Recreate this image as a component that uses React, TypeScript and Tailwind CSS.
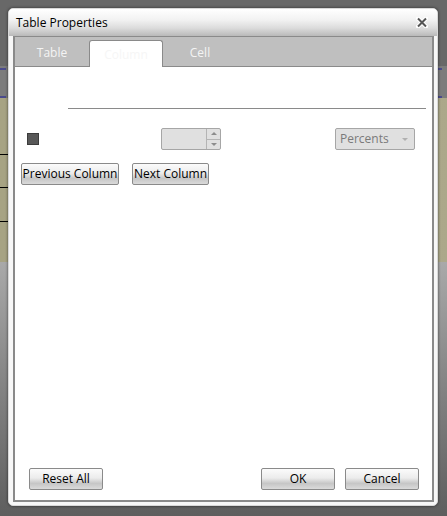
const font = { fontFamily: '"Open Sans", "Noto Sans", Arial, sans-serif' };

const btn =
  "h-[22px] border border-[#8a8a8a] rounded-[2px] bg-[linear-gradient(to_bottom,#fbfbfb_0%,#ececec_45%,#c6c6c6_72%,#dadada_100%)] text-[12px] text-black leading-none flex items-center justify-center";

const Tab = ({ label, active }: { label: string; active?: boolean }) =>
  active ? (
    <div className="w-[74px] mt-[3px] -mb-px h-[27px] bg-white border border-b-0 border-[#8a8a8a] rounded-t-[3px] flex items-center justify-center text-[12px] text-[#f6f6f6] pt-[1px]">
      {label}
    </div>
  ) : (
    <div className="w-[74px] flex items-center justify-center text-[12px] text-[#f4f4f4] pt-[3px]">
      {label}
    </div>
  );

const CloseIcon = () => (
  <svg width="12" height="11" viewBox="0 0 12 11">
    <path d="M2 1.5 L10 9.5 M10 1.5 L2 9.5" stroke="#ffffff" strokeWidth="4" strokeLinecap="round" />
    <path d="M2 1.5 L10 9.5 M10 1.5 L2 9.5" stroke="#555555" strokeWidth="2" />
  </svg>
);

export default function App() {
  return (
    <div className="relative w-[447px] h-[516px] overflow-hidden bg-[#666666]" style={font}>
      {/* page behind the dialog */}
      <div className="flex flex-col h-full">
        <div className="h-[66px] bg-[#686868]" />
        <div className="h-[32px] bg-[#7c7c7c] flex flex-col justify-between">
          <div className="flex justify-between h-[2px] mt-[2px]">
            <div className="w-[6px] bg-[#4b4b8c]" />
            <div className="w-[5px] bg-[#4b4b8c] mr-[5px]" />
          </div>
          <div className="flex justify-between h-[2px]">
            <div className="w-[6px] bg-[#4b4b8c]" />
            <div className="w-[5px] bg-[#4b4b8c] mr-[5px]" />
          </div>
        </div>
        <div className="h-[164px] bg-[linear-gradient(to_right,#a7a383,#a19d7e_50%,#aca88a)] flex flex-col">
          <div className="mt-[56px] w-[8px] h-px bg-black" />
          <div className="mt-[32px] w-[8px] h-px bg-black" />
          <div className="mt-[33px] w-[8px] h-px bg-black" />
        </div>
        <div className="flex-1 bg-[linear-gradient(to_bottom,#a9a9a9,#8a8a8a_40%,#5e5e5e)]" />
      </div>

      {/* dialog */}
      <div className="absolute left-[8px] top-[8px] w-[430px] h-[498px] rounded-[5px] border border-[#d8d8d8] bg-[#f7f7f7] shadow-[0_0_3px_rgba(0,0,0,0.6)] flex flex-col">
        <div className="h-[27px] rounded-t-[4px] bg-[linear-gradient(to_bottom,#ffffff_0%,#f2f2f2_40%,#dcdcdc_70%,#b9b9b9_100%)] flex items-center justify-between pl-[7px] pr-[9px]">
          <span className="text-[12px] text-black">Table Properties</span>
          <CloseIcon />
        </div>

        <div className="flex-1 ml-[4px] mr-[3px] mb-[3px] border-2 border-t border-[#8a8a8a] bg-white flex flex-col">
          <div className="h-[30px] bg-[#bfbfbf] border-b border-[#8a8a8a] flex">
            <Tab label="Table" />
            <Tab label="Column" active />
            <Tab label="Cell" />
          </div>

          <div className="flex-1 flex flex-col">
            <div className="mt-[41px] ml-[53px] mr-[6px] h-px bg-[#8a8a8a]" />

            <div className="mt-[19px] flex items-center h-[22px]">
              <div className="ml-[12px] w-[12px] h-[12px] bg-[#585858] border border-[#3c3c3c]" />
              <div className="ml-[122px] w-[60px] h-[22px] bg-[#e0e0e0] border border-[#a6a6a6] rounded-[2px] flex justify-end">
                <div className="w-[14px] border-l border-[#b4b4b4] flex flex-col">
                  <div className="flex-1 flex items-center justify-center border-b border-[#b4b4b4]">
                    <div className="w-0 h-0 border-x-[3px] border-x-transparent border-b-[3px] border-b-[#8c8c8c]" />
                  </div>
                  <div className="flex-1 flex items-center justify-center">
                    <div className="w-0 h-0 border-x-[3px] border-x-transparent border-t-[3px] border-t-[#8c8c8c]" />
                  </div>
                </div>
              </div>
              <div className="ml-[114px] w-[80px] h-[22px] bg-[#e0e0e0] border border-[#a6a6a6] rounded-[2px] flex items-center justify-between pl-[4px] pr-[6px]">
                <span className="text-[12px] text-[#7a7a7a]">Percents</span>
                <div className="w-0 h-0 border-x-[3px] border-x-transparent border-t-[3px] border-t-[#b0b0b0]" />
              </div>
            </div>

            <div className="mt-[13px] flex ml-[6px] gap-[13px]">
              <button className={`${btn} w-[98px]`}>Previous Column</button>
              <button className={`${btn} w-[77px]`}>Next Column</button>
            </div>

            <div className="mt-auto mb-[10px] flex items-center pl-[14px] pr-[14px]">
              <button className={`${btn} w-[74px]`}>Reset All</button>
              <button className={`${btn} w-[74px] ml-auto`}>OK</button>
              <button className={`${btn} w-[74px] ml-[10px] mr-[-1px]`}>Cancel</button>
            </div>
          </div>
        </div>
      </div>
    </div>
  );
}
